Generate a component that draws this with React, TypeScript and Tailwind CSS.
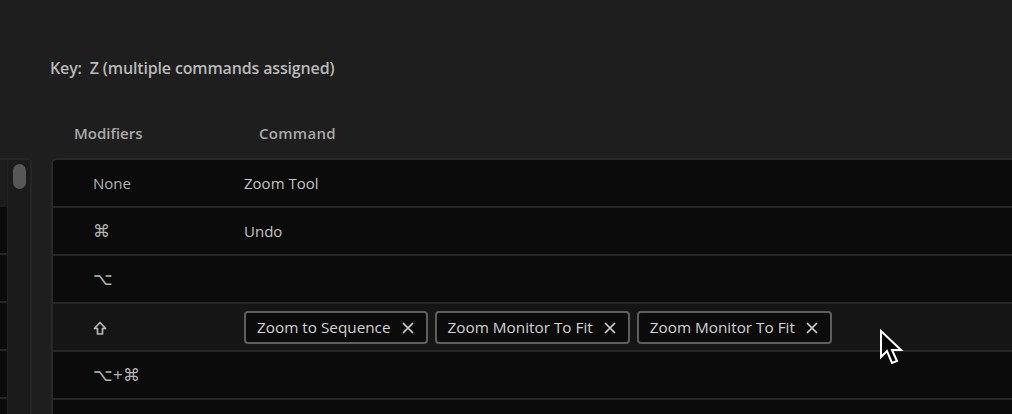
import React from "react";

const rows: { mod: string; cmd?: string; chips?: string[]; selected?: boolean }[] = [
  { mod: "None", cmd: "Zoom Tool" },
  { mod: "⌘", cmd: "Undo" },
  { mod: "⌥" },
  { mod: "shift", chips: ["Zoom to Sequence", "Zoom Monitor To Fit", "Zoom Monitor To Fit"], selected: true },
  { mod: "⌥+⌘" },
  { mod: "" },
];

function Chip({ label }: { label: string }) {
  return (
    <div className="flex h-[33px] items-center gap-[11px] rounded-[4px] border-2 border-[#5e5e5e] bg-[#0b0b0b] pl-[11px] pr-[12px] text-[15.3px] font-medium text-[#d2d2d2]">
      <span>{label}</span>
      <svg width="12" height="12" viewBox="0 0 12 12" className="mt-[1px]">
        <path d="M1.5 1.5 L10.5 10.5 M10.5 1.5 L1.5 10.5" stroke="#cfcfcf" strokeWidth="1.7" strokeLinecap="round" />
      </svg>
    </div>
  );
}

function Mod({ mod }: { mod: string }) {
  if (mod === "shift") {
    return (
      <svg width="14" height="15" viewBox="0 0 14 15" className="mt-[2px]">
        <path d="M7 1.5 L12.5 7.5 L9.5 7.5 L9.5 13 L4.5 13 L4.5 7.5 L1.5 7.5 Z" fill="none" stroke="#b8b8b8" strokeWidth="1.7" strokeLinejoin="round" />
      </svg>
    );
  }
  return <span>{mod}</span>;
}

export default function App() {
  return (
    <div
      className="relative h-[414px] w-[1012px] overflow-hidden bg-[#1e1e1e]"
      style={{ fontFamily: '"Open Sans", "Noto Sans", sans-serif' }}
    >
      <div className="pl-[50px] pt-[56px] text-[16px] font-semibold leading-[24px] tracking-[-0.15px] text-[#b9b9b9]">
        Key:&nbsp; Z (multiple commands assigned)
      </div>
      <div className="flex pt-[42px] text-[15px] font-semibold leading-[22px] text-[#a9a9a9]">
        <div className="w-[259px] pl-[74px]">Modifiers</div>
        <div className="tracking-[0.3px]">Command</div>
      </div>
      <div className="mt-[14px] flex">
        {/* left panel */}
        <div className="flex h-[300px] w-[32px] rounded-tr-[5px] border-r-2 border-t-2 border-[#262626]">
          <div className="flex w-[7px] flex-col">
            <div className="h-[47px] bg-[#1c1c1c]" />
            {[0, 1, 2, 3, 4].map((i) => (
              <div key={i} className="h-[48px] border-b-2 border-[#262626] bg-[#0b0b0b]" />
            ))}
          </div>
          <div className="relative flex-1 border-l border-[#232323] bg-[#1b1b1b]">
            <div className="absolute left-[5px] top-[4px] h-[25px] w-[13px] rounded-full bg-[#575757]" />
          </div>
        </div>
        {/* table */}
        <div className="ml-[19px] flex-1 overflow-hidden rounded-tl-[6px] border-l-2 border-t-2 border-[#282828]">
          {rows.map((r, i) => (
            <div
              key={i}
              className={`flex h-[48px] items-center border-b-2 border-[#272727] ${r.selected ? "bg-[#151515]" : "bg-[#0b0b0b]"}`}
            >
              <div
                className={`flex w-[191px] shrink-0 items-center pl-[40px] font-medium text-[#b4b4b4] ${r.mod === "None" ? "text-[15px]" : "text-[17px]"}`}
              >
                <Mod mod={r.mod} />
              </div>
              {r.cmd && <div className="text-[15px] font-medium text-[#c2c2c2]">{r.cmd}</div>}
              {r.chips && (
                <div className="flex gap-[7px]">
                  {r.chips.map((c, j) => (
                    <Chip key={j} label={c} />
                  ))}
                </div>
              )}
            </div>
          ))}
        </div>
      </div>
      {/* cursor */}
      <svg className="absolute left-[879px] top-[329px]" width="28" height="40" viewBox="0 0 28 40">
        <path
          d="M2 2 L2 28 L8 22 L13 34 L18 32 L13 21 L22 21 Z"
          fill="#000"
          stroke="#fff"
          strokeWidth="2"
          strokeLinejoin="miter"
        />
      </svg>
    </div>
  );
}
